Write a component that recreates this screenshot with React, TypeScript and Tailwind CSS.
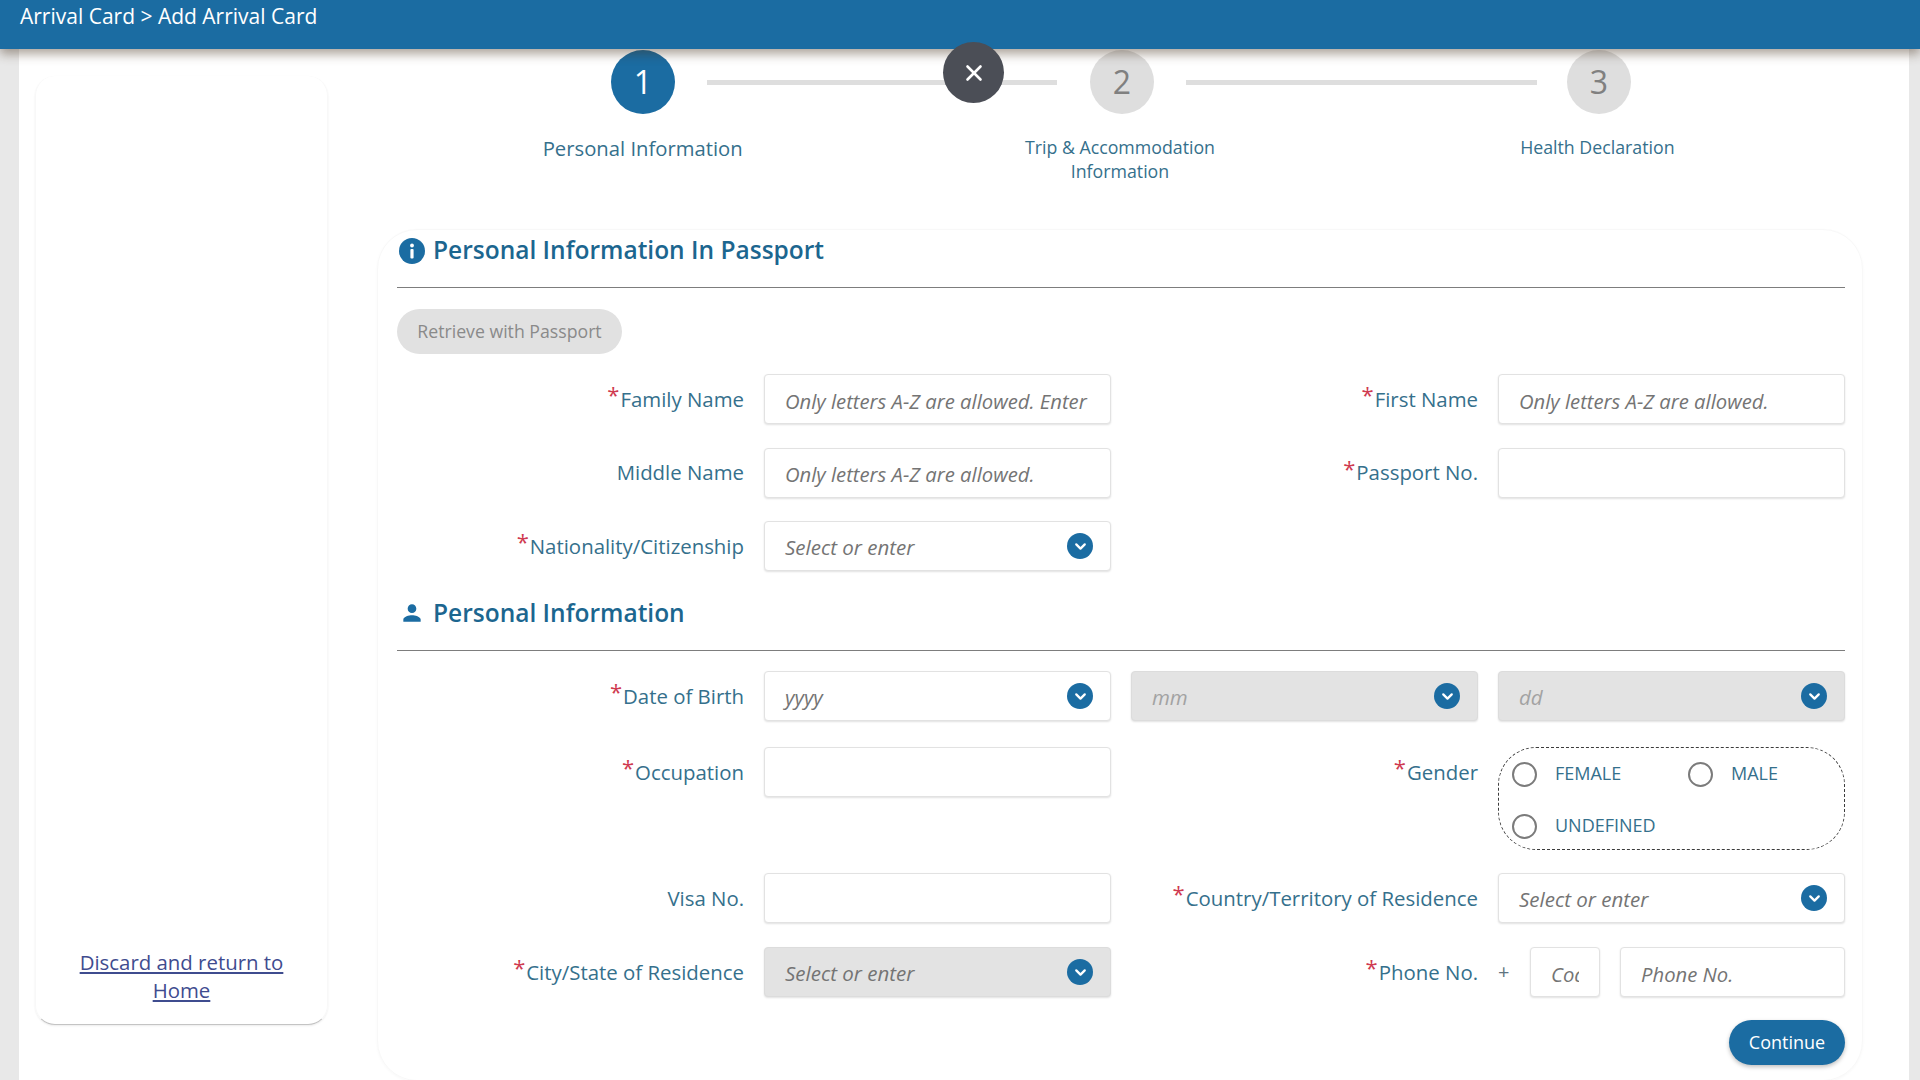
import { ChevronDown, X } from "lucide-react";
import type { ReactNode } from "react";

const FONT = "[font-family:'Open_Sans',sans-serif]";
const INPUT =
  "h-[50px] w-full rounded-[4px] border border-[#e2e2e2] bg-white px-[20px] pt-[3px] text-[20.25px] shadow-[0_1px_2px_rgba(0,0,0,0.12)] outline-none placeholder:italic placeholder:text-[#747474]";

function Label({ children, required }: { children: ReactNode; required?: boolean }) {
  return (
    <div className="flex h-[50px] items-center justify-end text-[20.4px] text-[#35708c]">
      {required && <span className="mr-[1px] -translate-y-[5px] text-[22px] leading-none text-[#cf3a50]">*</span>}
      <span>{children}</span>
    </div>
  );
}

function Field({ placeholder }: { placeholder?: string }) {
  return <input className={INPUT} placeholder={placeholder} />;
}

function Select({ placeholder, disabled, faint }: { placeholder: string; disabled?: boolean; faint?: boolean }) {
  return (
    <div
      className={`flex h-[50px] items-center justify-between rounded-[4px] border pl-[20px] pr-[17px] shadow-[0_1px_2px_rgba(0,0,0,0.12)] ${
        disabled ? "border-[#dcdcdc] bg-[#e3e3e3]" : "border-[#e2e2e2] bg-white"
      }`}
    >
      <span className={`pt-[3px] text-[20.5px] italic ${faint ? "text-[#a2a2a2]" : "text-[#747474]"}`}>{placeholder}</span>
      <span className="flex size-[26px] items-center justify-center rounded-full bg-[#1b6ca2]">
        <ChevronDown className="size-[17px] text-white" strokeWidth={3.2} />
      </span>
    </div>
  );
}

function Radio({ label }: { label: string }) {
  return (
    <label className="flex items-center gap-[18px] text-[18px] text-[#35708c]">
      <span className="size-[25px] shrink-0 rounded-full border-2 border-[#7b7b7b] bg-white" />
      <span className="-translate-y-[1px]">{label}</span>
    </label>
  );
}

function SectionTitle({ icon, children }: { icon: ReactNode; children: ReactNode }) {
  return (
    <div className="flex items-center border-b border-[#7d7d7d] pb-[19px] pt-[2px]">
      <div className="ml-[2px] flex w-[26px] justify-center">{icon}</div>
      <h2 className="ml-[8px] text-[24.5px] font-semibold leading-[36px] text-[#1c668f]">{children}</h2>
    </div>
  );
}

const ROW = "grid grid-cols-[repeat(4,347px)] gap-x-5";

export default function App() {
  return (
    <div className={`flex h-screen flex-col overflow-hidden bg-[#e8e8e8] ${FONT}`}>
      <header className="relative z-10 h-[49px] shrink-0 bg-[#1b6ca2] pl-[20px] pt-[2px] text-[21px] leading-[28px] text-white shadow-[0_5px_10px_rgba(70,50,30,0.45)]">
        Arrival Card &gt; Add Arrival Card
      </header>
      <button className="absolute left-[943px] top-[42px] z-20 flex size-[61px] items-center justify-center rounded-full bg-[#4b4e56] text-white">
        <X className="size-[26px]" strokeWidth={2.4} />
      </button>

      <div className="ml-[19px] mr-[11px] flex flex-1 bg-white pl-[16px]">
        {/* Left card */}
        <aside className="mt-[27px] flex h-[949px] w-[293px] shrink-0 flex-col justify-end rounded-[20px] border-x border-b border-x-[#f8f8f8] border-b-[#c4c4c4] pb-[20px] shadow-[0_1px_2px_rgba(0,0,0,0.08)]">
          <a className="px-[20px] text-center text-[20.4px] leading-[27.5px] text-[#3f4c8f] underline">
            Discard and return to Home
          </a>
        </aside>

        <main className="ml-[49px] w-[1486px] shrink-0">
          {/* Stepper */}
          <div className="flex items-center pl-[234px] pt-[1px]">
            <div className="flex size-[64px] items-center justify-center rounded-full bg-[#1b6ca2] text-[32px] text-white">1</div>
            <div className="ml-[32px] h-[5px] w-[350px] bg-[#dedede]" />
            <div className="ml-[33px] flex size-[64px] items-center justify-center rounded-full bg-[#dedede] text-[32px] text-[#808080]">2</div>
            <div className="ml-[32px] h-[5px] w-[351px] bg-[#dedede]" />
            <div className="ml-[30px] flex size-[64px] items-center justify-center rounded-full bg-[#dedede] text-[32px] text-[#808080]">3</div>
          </div>
          <div className="mt-[20px] grid grid-cols-3 px-[27px] text-center text-[#35708c]">
            <div className="text-[20.25px] leading-[28px]">Personal Information</div>
            <div className="mx-auto w-[220px] pt-px text-[17.75px] leading-[24px]">Trip &amp; Accommodation Information</div>
            <div className="pt-px text-[17.75px] leading-[24px]">Health Declaration</div>
          </div>

          {/* Form card */}
          <section className="mt-[46px] h-[852px] rounded-[40px] border border-[#f8f8f8] pl-[19px] pr-[17px] shadow-[0_1px_3px_rgba(0,0,0,0.03)]">
            <SectionTitle
              icon={
                <svg viewBox="0 0 26 26" className="mt-[2px] size-[26px]">
                  <circle cx="13" cy="13" r="13" fill="#1b6ca2" />
                  <circle cx="13" cy="7.5" r="1.9" fill="#fff" />
                  <rect x="11.4" y="11" width="3.2" height="9.5" rx="1" fill="#fff" />
                </svg>
              }
            >
              Personal Information In Passport
            </SectionTitle>

            <button className="mt-[21px] h-[45px] w-[225px] rounded-full bg-[#e1e1e1] text-[17.7px] text-[#8a8a8a]">
              Retrieve with Passport
            </button>

            <div className={`mt-[20px] ${ROW} gap-y-[23.5px]`}>
              <Label required>Family Name</Label>
              <Field placeholder="Only letters A-Z are allowed. Enter as on passport" />
              <Label required>First Name</Label>
              <Field placeholder="Only letters A-Z are allowed." />
              <Label>Middle Name</Label>
              <Field placeholder="Only letters A-Z are allowed." />
              <Label required>Passport No.</Label>
              <Field />
              <Label required>Nationality/Citizenship</Label>
              <Select placeholder="Select or enter" />
            </div>

            <div className="mt-[22px]">
              <SectionTitle
                icon={
                  <svg viewBox="0 0 24 24" className="size-[32px]" fill="#1b6ca2">
                    <path d="M12 12c2.21 0 4-1.79 4-4s-1.79-4-4-4-4 1.79-4 4 1.79 4 4 4zm0 2c-2.67 0-8 1.34-8 4v2h16v-2c0-2.66-5.33-4-8-4z" />
                  </svg>
                }
              >
                Personal Information
              </SectionTitle>
            </div>

            <div className={`mt-[20px] ${ROW}`}>
              <Label required>Date of Birth</Label>
              <Select placeholder="yyyy" />
              <Select placeholder="mm" disabled faint />
              <Select placeholder="dd" disabled faint />
            </div>

            <div className={`mt-[26px] ${ROW}`}>
              <Label required>Occupation</Label>
              <Field />
              <Label required>Gender</Label>
              <div className="grid h-[103px] grid-cols-[176px_1fr] content-start gap-y-[25px] rounded-[38px] border border-dashed border-[#3c3c3c] pl-[13px] pt-[13px]">
                <Radio label="FEMALE" />
                <Radio label="MALE" />
                <Radio label="UNDEFINED" />
              </div>
            </div>

            <div className={`mt-[23px] ${ROW}`}>
              <Label>Visa No.</Label>
              <Field />
              <Label required>Country/Territory of Residence</Label>
              <Select placeholder="Select or enter" />
            </div>

            <div className={`mt-[24px] ${ROW}`}>
              <Label required>City/State of Residence</Label>
              <Select placeholder="Select or enter" disabled />
              <Label required>Phone No.</Label>
              <div className="flex items-center">
                <span className="w-[32px] text-[20px] text-[#5f7480]">+</span>
                <input className={`${INPUT} !w-[70px] shrink-0`} placeholder="Code" />
                <div className="ml-[20px] flex-1">
                  <Field placeholder="Phone No." />
                </div>
              </div>
            </div>

            <div className="mt-[23px] flex justify-end">
              <button className="h-[45px] w-[116px] rounded-full bg-[#1b6ca2] text-[18px] text-white shadow-[0_2px_4px_rgba(0,0,0,0.25)]">
                Continue
              </button>
            </div>
          </section>
        </main>
      </div>
    </div>
  );
}
